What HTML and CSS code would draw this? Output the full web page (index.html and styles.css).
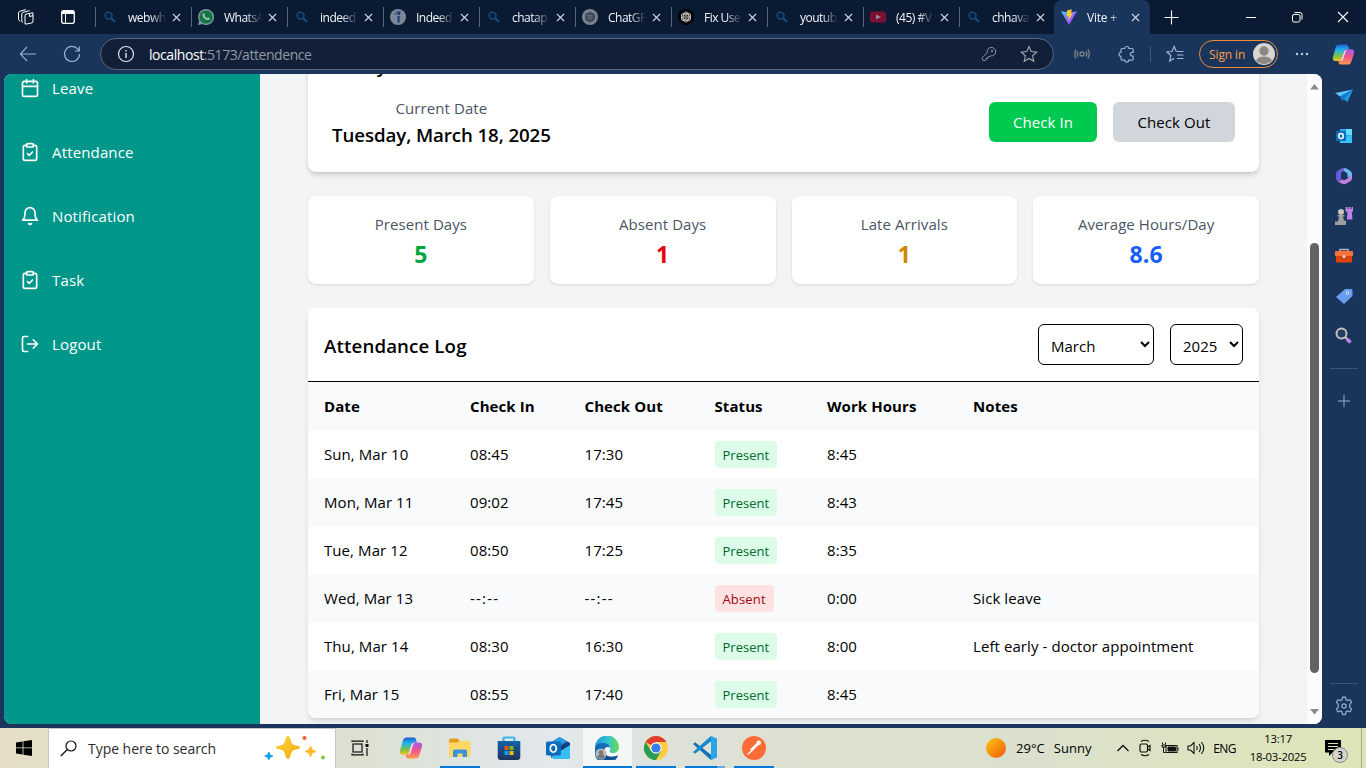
FILE: index.html
```html
<!DOCTYPE html>
<html lang="en">
<head>
<meta charset="utf-8">
<title>Vite + React</title>
<link rel="stylesheet" href="styles.css">
</head>
<body>
<svg class="defs" width="0" height="0">
  <defs>
    <linearGradient id="gVite" x1="0" y1="0" x2="1" y2="1"><stop offset="0" stop-color="#41d1ff"/><stop offset=".6" stop-color="#9b5cff"/><stop offset="1" stop-color="#bd34fe"/></linearGradient>
    <linearGradient id="gCopA" x1="0" y1="0" x2="0" y2="1"><stop offset="0" stop-color="#1b5fd8"/><stop offset=".35" stop-color="#23b7e8"/><stop offset=".7" stop-color="#7cc04a"/><stop offset="1" stop-color="#f5c51c"/></linearGradient>
    <linearGradient id="gCopB" x1="0" y1="0" x2="0" y2="1"><stop offset="0" stop-color="#a558e8"/><stop offset=".5" stop-color="#f0568c"/><stop offset="1" stop-color="#ff9a4d"/></linearGradient>
    <linearGradient id="gSun" x1="0" y1="0" x2="1" y2="1"><stop offset="0" stop-color="#ffc814"/><stop offset="1" stop-color="#f0560c"/></linearGradient>
    <linearGradient id="gEdge" x1="0" y1="0" x2="1" y2="0"><stop offset="0" stop-color="#2393dd"/><stop offset=".55" stop-color="#30c3d0"/><stop offset="1" stop-color="#6ade4a"/></linearGradient>
    <linearGradient id="gStore" x1="0" y1="0" x2="0" y2="1"><stop offset="0" stop-color="#1164a8"/><stop offset="1" stop-color="#20345c"/></linearGradient>
    <linearGradient id="gStar" x1="0" y1="0" x2="1" y2="1"><stop offset="0" stop-color="#ffd93a"/><stop offset="1" stop-color="#f2a20c"/></linearGradient>
  </defs>
  <symbol id="search" viewBox="0 0 16 16"><circle cx="6.6" cy="6.6" r="3.4" fill="none" stroke="#11508c" stroke-width="1.5"/><path d="M9.2 9.2l4 4" stroke="#11508c" stroke-width="1.8"/></symbol>
  <symbol id="x" viewBox="0 0 10 10"><path d="M1 1l8 8M9 1l-8 8" stroke="#dfe4ec" stroke-width="1.3" fill="none"/></symbol>
  <symbol id="knot" viewBox="0 0 16 16"><g fill="none" stroke-width=".9"><ellipse cx="8" cy="8" rx="2.8" ry="5"/><ellipse cx="8" cy="8" rx="2.8" ry="5" transform="rotate(60 8 8)"/><ellipse cx="8" cy="8" rx="2.8" ry="5" transform="rotate(120 8 8)"/><circle cx="8" cy="8" r="1.300"/></g></symbol>
  <symbol id="copilot" viewBox="0 0 24 24"><path d="M7.500 1.500h7.200c1.300 0 2 .8 2.300 2l.9 3h-2.700c-1.500 0-2.200.8-2.700 2.300L10 16.500c-.5 1.500-1.200 2.300-2.700 2.300H4c-3 0-3.600-2.300-2.900-4.800L4 4.300c.7-2 1.700-2.800 3.500-2.800z" fill="url(#gCopA)"/><path d="M16.500 22.500H9.300c-1.300 0-2-.8-2.300-2l-.5-1.700h.8c1.500 0 2.200-.8 2.700-2.300l2.900-8c.5-1.500 1.200-2 2.700-2H20c3 0 3.600 2.300 2.900 4.800L20 19.700c-.7 2-1.700 2.800-3.500 2.800z" fill="url(#gCopB)"/><path d="M12.500 8.800L10 16.500q-.5 1.700-1.700 2.200h1.200q1.600 0 2.200-1.900l2.400-7.500q.5-1.700 1.700-2.300h-1q-1.700 0-2.300 1.800z" fill="#fff" opacity=".75"/></symbol>
  <symbol id="clip" viewBox="0 0 24 24"><rect x="8" y="2" width="8" height="4" rx="1"/><path d="M16 4h2a2 2 0 0 1 2 2v14a2 2 0 0 1-2 2H6a2 2 0 0 1-2-2V6a2 2 0 0 1 2-2h2M9 14l2 2 4-4"/></symbol>
</svg>

<header class="tabs">
  <div class="tabs-lead">
    <svg width="18" height="18" viewBox="0 0 18 18" fill="none" stroke="#fff" stroke-width="1"><rect x="8" y="5.500" width="8" height="10" rx="1.500" transform="skewY(-12) translate(0 2.500)"/><path d="M6 14.500Q4.800 14 4.800 13V6q0-1.300 1-1.600L12.500 2.700M3.200 13Q1.500 12.500 1.500 11.500V5q0-1.300 1-1.600L9 1.500M12.500 5v3.500l3.500-.8"/></svg>
    <svg width="16" height="16" viewBox="0 0 16 16"><rect x="1.700" y="1.700" width="12.600" height="12.600" rx="2" fill="none" stroke="#fff" stroke-width="1.300"/><path d="M2 2h12v3H2z" fill="#fff"/><path d="M5.500 5v9" stroke="#fff"/></svg>
  </div>
  <div class="tab"><svg class="fav"><use href="#search"/></svg><span>webwh</span><svg class="x"><use href="#x"/></svg></div>
  <div class="tab"><svg class="fav" viewBox="0 0 16 16"><path d="M8 0a8 8 0 1 1-3.800 15L0 16l1.100-4A8 8 0 0 1 8 0z" fill="#7e949e"/><circle cx="8" cy="8" r="6.600" fill="#117443"/><path d="M5.400 4.300c1-.5 1.500 1 1.600 1.700l-.5.8q1 1.800 2.600 2.400l.9-.9 1.700.9c.2 1.500-1.200 2.200-2.500 1.800C6.400 10.300 4.500 8 4.500 6q0-1 .9-1.700z" fill="#a8bcb9"/></svg><span>WhatsA</span><svg class="x"><use href="#x"/></svg></div>
  <div class="tab"><svg class="fav"><use href="#search"/></svg><span>indeed</span><svg class="x"><use href="#x"/></svg></div>
  <div class="tab"><svg class="fav" viewBox="0 0 16 16"><circle cx="8" cy="8" r="8" fill="#7b8797"/><circle cx="8.800" cy="4.600" r="1.500" fill="#163a78"/><path d="M8.600 7v6.500" stroke="#163a78" stroke-width="2"/><path d="M4.800 6Q6 2 10.800 3" stroke="#163a78" fill="none"/></svg><span>Indeed</span><svg class="x"><use href="#x"/></svg></div>
  <div class="tab"><svg class="fav"><use href="#search"/></svg><span>chatap</span><svg class="x"><use href="#x"/></svg></div>
  <div class="tab"><svg class="fav" viewBox="0 0 16 16" stroke="#323d4e"><circle cx="8" cy="8" r="8" fill="#7b8491" stroke="none"/><use href="#knot"/></svg><span>ChatGP</span><svg class="x"><use href="#x"/></svg></div>
  <div class="tab"><svg class="fav" viewBox="0 0 16 16" stroke="#c8c8c8"><circle cx="8" cy="8" r="8" fill="#000" stroke="none"/><use href="#knot"/></svg><span>Fix Use</span><svg class="x"><use href="#x"/></svg></div>
  <div class="tab"><svg class="fav"><use href="#search"/></svg><span>youtub</span><svg class="x"><use href="#x"/></svg></div>
  <div class="tab"><svg class="fav" viewBox="0 0 16 16"><rect y="2.500" width="16" height="11" rx="2.500" fill="#7b1033"/><path d="M6 5.500v5L11 8z" fill="#8e8d9b"/></svg><span>(45) #V</span><svg class="x"><use href="#x"/></svg></div>
  <div class="tab"><svg class="fav"><use href="#search"/></svg><span>chhava</span><svg class="x"><use href="#x"/></svg></div>
  <div class="tab active"><svg class="fav" viewBox="0 0 16 16"><path d="M0 2.200L8 16l8-13.800-7 1.200z" fill="url(#gVite)"/><path d="M6 1.500L10.800.3 10 4.200l1.800-.3L7.500 12l.3-4.800-2 .4z" fill="#ffc72a"/></svg><span>Vite +</span><svg class="x"><use href="#x"/></svg></div>
  <svg class="plus" width="15" height="15" viewBox="0 0 15 15"><path d="M7.500.5v14M.5 7.500h14" stroke="#fff" stroke-width="1.100"/></svg>
  <div class="win">
    <svg width="12" height="12"><path d="M1 6.500h10" stroke="#fff"/></svg>
    <svg width="12" height="12" fill="none" stroke="#fff"><rect x="1.500" y="3.500" width="7.500" height="7.500" rx="1.500"/><path d="M3.500 1.500h5.500q2 0 2 2v5"/></svg>
    <svg width="12" height="12"><path d="M1 1l10 10M11 1L1 11" stroke="#fff" stroke-width="1.100"/></svg>
  </div>
</header>

<nav class="toolbar">
  <svg class="back" width="18" height="16" viewBox="0 0 18 16" fill="none" stroke="#97afd0" stroke-width="1.100"><path d="M17 8H1.500M8 1L1.300 8 8 15"/></svg>
  <svg class="reload" width="18" height="18" viewBox="0 0 18 18" fill="none" stroke="#97afd0" stroke-width="1.200"><path d="M16.500 9A7.500 7.500 0 1 1 14.800 4.200L16.300 6M16.300 1.500V6h-4.500"/></svg>
  <div class="address">
    <svg width="18" height="18" viewBox="0 0 18 18" fill="none" stroke="#dfe4ec" stroke-width="1.200"><circle cx="9" cy="9" r="7.500"/><path d="M9 8v5M9 5v1.400" stroke-width="1.400"/></svg>
    <p class="url"><b>localhost</b>:5173/attendence</p>
    <svg class="key" width="16" height="16" viewBox="0 0 16 16" fill="none" stroke="#8b929e"><path d="M6.200 6.700A4.300 4.300 0 1 1 9.400 9.900L8 11H6.700v1.500H5.200v1.400L4.600 14.500H2q-.8-.2-.7-1v-2z"/><circle cx="11" cy="5" r=".8"/></svg>
    <svg class="star" width="18" height="18" viewBox="0 0 18 18" fill="none" stroke="#a2a7b0" stroke-width="1.100"><path d="M9 1.500l2.200 5 5.600.6-4.200 3.700 1.200 5.500L9 13.500l-4.800 2.800 1.200-5.500L1.200 7.100l5.600-.6z"/></svg>
  </div>
  <div class="tools">
    <svg width="18" height="18" viewBox="0 0 18 18" fill="none" stroke="#7c8188" stroke-width="1.400"><circle cx="9" cy="9" r="2"/><path d="M5 6.300Q3.500 9 5 11.700M13 6.300Q14.500 9 13 11.700M3 4.500Q.5 9 3 13.500M15 4.500Q17.500 9 15 13.500"/></svg>
    <svg width="18" height="18" viewBox="0 0 18 18" fill="none" stroke="#97afd0" stroke-width="1.200"><path d="M4 3.500h2.800a2 2 0 1 1 4 0h3.400q1 0 1 1v2.800h-1a1.900 1.900 0 1 0 0 3.800h1v3q0 1-1 1h-3.400a2 2 0 1 1-4 0H4q-1 0-1-1v-2.800a2 2 0 1 1 0-4V4.500q0-1 1-1z"/></svg>
    <i class="divider"></i>
    <svg width="18" height="18" viewBox="0 0 18 18" fill="none" stroke="#a2b7d3" stroke-width="1.200"><path d="M10.300 6.200L8.200 1.500l-2.200 5-5 .5 3.800 3.500-1.100 5.500 4.500-2.700M10.500 6.500h7M11 10h6.500M11 13.500h6.500"/></svg>
  </div>
  <div class="signin"><span>Sign in</span><svg width="22" height="22" viewBox="0 0 22 22"><circle cx="11" cy="11" r="11" fill="#d8d6d2"/><circle cx="11" cy="8" r="4.700" fill="#8c8984"/><path d="M3 17.500q2-4 8-4t8 4A11 11 0 0 1 3 17.500z" fill="#8c8984"/></svg></div>
  <svg class="dots" width="14" height="4" fill="#c1cfe2"><circle cx="2" cy="2" r="1.200"/><circle cx="7" cy="2" r="1.200"/><circle cx="12" cy="2" r="1.200"/></svg>
  <svg class="cop" width="23" height="23"><use href="#copilot"/></svg>
</nav>

<div class="middle">
  <div class="page">
    <aside class="sidebar">
      <a><svg class="ico" viewBox="0 0 24 24"><rect x="3" y="4" width="18" height="18" rx="2"/><path d="M8 2v4M16 2v4M3 10h18"/></svg>Leave</a>
      <a><svg class="ico"><use href="#clip"/></svg>Attendance</a>
      <a><svg class="ico" viewBox="0 0 24 24"><path d="M6 8a6 6 0 0 1 12 0c0 7 3 9 3 9H3s3-2 3-9M10.300 21a1.940 1.940 0 0 0 3.400 0"/></svg>Notification</a>
      <a><svg class="ico"><use href="#clip"/></svg>Task</a>
      <a><svg class="ico" viewBox="0 0 24 24"><path d="M9 21H5a2 2 0 0 1-2-2V5a2 2 0 0 1 2-2h4M16 17l5-5-5-5M21 12H9"/></svg>Logout</a>
    </aside>
    <main class="content">
      <section class="card today">
        <h2>Today's Attendance</h2>
        <div class="today-row">
          <div class="date"><p>Current Date</p><strong>Tuesday, March 18, 2025</strong></div>
          <div class="actions"><button class="in">Check In</button><button class="out">Check Out</button></div>
        </div>
      </section>
      <section class="stats">
        <div class="card stat"><p>Present Days</p><b class="green">5</b></div>
        <div class="card stat"><p>Absent Days</p><b class="red">1</b></div>
        <div class="card stat"><p>Late Arrivals</p><b class="amber">1</b></div>
        <div class="card stat"><p>Average Hours/Day</p><b class="blue">8.6</b></div>
      </section>
      <section class="card log">
        <div class="log-head">
          <h2>Attendance Log</h2>
          <select class="month"><option>March</option></select>
          <select class="year"><option>2025</option></select>
        </div>
        <table>
          <colgroup><col class="c1"><col class="c2"><col class="c3"><col class="c4"><col class="c5"><col></colgroup>
          <thead><tr><th>Date</th><th>Check In</th><th>Check Out</th><th>Status</th><th>Work Hours</th><th>Notes</th></tr></thead>
          <tbody>
            <tr><td>Sun, Mar 10</td><td>08:45</td><td>17:30</td><td><span class="badge">Present</span></td><td>8:45</td><td></td></tr>
            <tr><td>Mon, Mar 11</td><td>09:02</td><td>17:45</td><td><span class="badge">Present</span></td><td>8:43</td><td></td></tr>
            <tr><td>Tue, Mar 12</td><td>08:50</td><td>17:25</td><td><span class="badge">Present</span></td><td>8:35</td><td></td></tr>
            <tr><td>Wed, Mar 13</td><td class="dash">--:--</td><td class="dash">--:--</td><td><span class="badge absent">Absent</span></td><td>0:00</td><td>Sick leave</td></tr>
            <tr><td>Thu, Mar 14</td><td>08:30</td><td>16:30</td><td><span class="badge">Present</span></td><td>8:00</td><td>Left early - doctor appointment</td></tr>
            <tr><td>Fri, Mar 15</td><td>08:55</td><td>17:40</td><td><span class="badge">Present</span></td><td>8:45</td><td></td></tr>
          </tbody>
        </table>
      </section>
    </main>
    <div class="scrollbar">
      <svg width="9" height="6"><path d="M4.500 0L9 5.500H0z" fill="#8b8b8b"/></svg>
      <i class="thumb"></i>
      <svg width="9" height="6"><path d="M4.500 5.500L9 0H0z" fill="#8b8b8b"/></svg>
    </div>
  </div>
  <aside class="rail">
    <svg viewBox="0 0 18 18"><path d="M0 6l18-3.500L5 9.500z" fill="#58c8f7"/><path d="M5 9.500l13-7L12.500 15z" fill="#1e9be8"/><path d="M5 9.500L18 2.500 7 14z" fill="#1478cc"/></svg>
    <svg viewBox="0 0 18 18"><path d="M5 2h12v14H5z" fill="#2aa8ea"/><path d="M11 2h6v6h-6z" fill="#5fdcff"/><path d="M5 12l12-4v8H5z" fill="#35c3f4"/><rect x="1" y="4" width="10" height="10" rx="1" fill="#0f6cbd"/><ellipse cx="6" cy="9" rx="2.300" ry="2.600" fill="none" stroke="#fff" stroke-width="1.500"/></svg>
    <svg viewBox="0 0 18 18"><path d="M9.500 1Q8 .8 6.500 1.600L2.500 4Q1 5 1 7v4q0 2 1.500 3l1.500.8 2-2.300V7q0-1.500 1.300-2.200z" fill="#6a5bd8"/><path d="M9.500 1q1 0 2 .6l4 2.400Q17 5 17 7v5.500L12.500 10V7.500q0-1.300-1.200-2L8 3.500z" fill="#6fb6f5"/><path d="M17 10.500v.5q0 2-1.500 3l-4 2.500q-2.500 1.300-5 0l-4-2.300q3 .5 4.500-2l1 .6q1.200.6 2.300 0l2.500-1.500L14.500 9z" fill="#c07fe0"/></svg>
    <svg viewBox="0 0 18 18"><path d="M10.500 0h2v2h1V0h2v2h1V0h1.500v4l-1.200 1.500.7 7h-5.700l.7-7L10.500 4z" fill="#bd83e4"/><circle cx="6" cy="5" r="3" fill="#c5c2bf"/><path d="M2.500 8h7v1.500H8l1 4h2V18H0v-3.500h3l1-5H2.500z" fill="#a19f9d"/></svg>
    <svg viewBox="0 0 18 18"><path d="M5 5V2.500h8V5" fill="none" stroke="#b8b5b2" stroke-width="1.500"/><rect y="4" width="18" height="5.500" rx="1" fill="#f7713b"/><path d="M1 9h16v6.500H1z" fill="#d9430f"/><circle cx="9" cy="9.500" r="1.500" fill="#e1dfdd"/></svg>
    <svg viewBox="0 0 18 18"><path d="M10 2h6q1.500 0 1.500 1.500V9L9 17 1 10z" fill="#6a9cf0"/><circle cx="12.500" cy="6" r="1.800" fill="#e1f1ff"/><circle cx="12.500" cy="6" r=".8" fill="#274582"/></svg>
    <svg viewBox="0 0 18 18"><circle cx="6.500" cy="6.500" r="5" fill="#263e60" stroke="#c3c0bd" stroke-width="2"/><path d="M10.500 10.500l1.500 1.500" stroke="#d2d0ce" stroke-width="2"/><path d="M12 12l3.500 3.500" stroke="#bd83e4" stroke-width="3.500"/></svg>
    <i class="rule"></i>
    <svg class="add" viewBox="0 0 12 12"><path d="M6 0v12M0 6h12" stroke="#97afd0" stroke-width="1"/></svg>
    <i class="rule bottom"></i>
    <svg class="gear" viewBox="0 0 20 20" fill="none" stroke="#97afd0" stroke-width="1.200"><circle cx="10" cy="10" r="2.200"/><path d="M8 3.500l.6-2.300q1.400-.3 2.800 0l.6 2.300 1.800 1 2.300-.7q1 1 1.400 2.400L15.800 8.500v3l1.700 1.700q-.4 1.400-1.400 2.500l-2.300-.7-1.800 1-.6 2.500q-1.400.3-2.800 0L8 16l-1.800-1-2.300.7q-1-1.100-1.400-2.500l1.700-1.700v-3L2.500 6.200Q2.900 4.800 3.900 3.800l2.300.7z"/></svg>
  </aside>
</div>

<footer class="taskbar">
  <div class="start"><svg width="16" height="16" viewBox="0 0 16 16"><path d="M0 2.400l6.600-1v6.100H0zM7.400 1.200L16 0v7.500H7.400zM0 8.300h6.600v6.200L0 13.600zM7.400 8.300H16V16l-8.600-1.300z"/></svg></div>
  <div class="search">
    <svg width="17" height="17" viewBox="0 0 17 17" fill="none" stroke="#111" stroke-width="1.200"><circle cx="11" cy="6" r="5"/><path d="M7.300 9.500L.8 16"/></svg>
    <span>Type here to search</span>
    <svg class="sparkles" width="62" height="28" viewBox="0 0 62 28"><path d="M24 1c2.500 0 2.500 6 4.500 8s7.500 1.500 7.500 3.500-5.500 1.500-7.500 3.500-2 8-4.500 8-2.500-6-4.500-8-7.500-1.500-7.500-3.500 5.500-1.500 7.500-3.500 2-8 4.500-8z" fill="url(#gStar)"/><path d="M46.500 11c1.300 0 1 2.500 2 3.500s3.500.6 3.500 1.900-2.500.9-3.500 1.900-.7 3.700-2 3.700-1-2.700-2-3.700-3.500-.6-3.500-1.900 2.500-.9 3.500-1.900.7-3.500 2-3.500z" fill="#fbbd21"/><path d="M5 17c1.300 0 .8 2 1.500 2.700s2.500.2 2.500 1.600-2 .7-2.700 1.400-.3 2.300-1.600 2.300-.8-1.900-1.500-2.600S.5 22 .5 20.900s2-.8 2.700-1.500S3.700 17 5 17z" fill="#1d9ee8"/><circle cx="40.500" cy="3" r="2.100" fill="#f2602f"/><circle cx="59" cy="22.500" r="2" fill="#84c341"/></svg>
  </div>
  <div class="taskview"><svg width="18" height="16" fill="none" stroke="#111" stroke-width="1.200"><rect x="2" y="4" width="9" height="8"/><path d="M1 2V.500M1 1.200h11M1 14.800h11M1 15.500V13.500M12 .500V2M12 15.500V13.500M16 0v3M16 8v8"/><path d="M14.500 5.500h3" stroke-width="3"/></svg></div>
  <div class="apps">
    <div class="app"><svg><use href="#copilot"/></svg></div>
    <div class="app open"><svg viewBox="0 0 24 24"><path d="M1 4q0-1.500 1.500-1.500h7L12 5v3H1z" fill="#dfa11a"/><path d="M1 6.500h8.500L12 4.700h9.500q1 0 1 1V20q0 1-1 1H2q-1 0-1-1z" fill="#ffd766"/><path d="M5 21v-6q0-1.500 1.500-1.500h11q1.500 0 1.500 1.500v6h-4.500v-3.500h-5V21z" fill="#3b92d8"/></svg></div>
    <div class="app"><svg viewBox="0 0 24 24"><path d="M6.500 7V2.500q0-1 1-1h9q1 0 1 1V7" fill="none" stroke="#43b5ea" stroke-width="2.200"/><path d="M.7 5h22.600v16q0 3-3 3H3.700q-3 0-3-3z" fill="url(#gStore)"/><path d="M7.500 10h4v4h-4z" fill="#f25022"/><path d="M12.500 10h4v4h-4z" fill="#7fba00"/><path d="M7.500 15h4v4h-4z" fill="#00a4ef"/><path d="M12.500 15h4v4h-4z" fill="#ffb900"/></svg></div>
    <div class="app"><svg viewBox="0 0 24 24"><path d="M4 7l9.500-6L24 7v14q0 1-1 1H5z" fill="#1463b5"/><path d="M4 7l9.500-6 7 4-9 6z" fill="#2c9be0"/><path d="M22 6l2 1v4l-9 5V10z" fill="#123f7b"/><path d="M24 9v13q0 1-1 1H8l-3-2z" fill="#38bdf2"/><rect y="5.500" width="15" height="14" rx="1.500" fill="#0f6cbd"/><ellipse cx="7.300" cy="12.400" rx="3" ry="3.700" fill="none" stroke="#fff" stroke-width="1.800"/></svg></div>
    <div class="app open current"><svg viewBox="0 0 24 24"><path d="M0 12A12 12 0 0 1 24 11c0 4-3 6-6 6s-4-1-3-3 0-6-6-6-9 2-9 4z" fill="url(#gEdge)"/><path d="M0 12c0-3 4-5 8-5 5 0 7 3 7 5-2-2-6-1-6 3s5 8 14 4.500A12 12 0 0 1 0 12z" fill="#116bb7"/><path d="M9 15c0 4 5 8 14 4.500-3 4-8 5-12 4.500-4-2-6-9 0-12q-2 1-2 3z" fill="#144c91"/><circle cx="6" cy="18" r="5.500" fill="#b9b9b9"/><circle cx="6" cy="16.500" r="2.300" fill="#777"/><path d="M2 21q1-3 4-3t4 3q-4 4-8 0z" fill="#777"/></svg></div>
    <div class="app open"><svg viewBox="0 0 24 24"><circle cx="12" cy="12" r="12" fill="#ffcd41"/><path d="M12 12L1.600 6A12 12 0 0 1 22.400 6H12z" fill="#df3d30"/><path d="M1.600 6A12 12 0 0 0 12 24l5-9-10 0z" fill="#279c52"/><circle cx="12" cy="12" r="5.700" fill="#fff"/><circle cx="12" cy="12" r="4.600" fill="#3b7ded"/></svg></div>
    <div class="app open multi"><svg viewBox="0 0 24 24"><path d="M0 8l2-1.700L18 18.700V24z" fill="#1073b7"/><path d="M0 16l2 1.700L18 5.300V0z" fill="#178ad2"/><path d="M18 0l6 2.500v19L18 24z" fill="#2ba5ea"/></svg></div>
    <div class="app open"><svg viewBox="0 0 24 24"><circle cx="12" cy="12" r="12" fill="#ff6c37"/><path d="M9 14.500l6.500-6.500" stroke="#fff" stroke-width="2.800"/><path d="M5.500 18.500l4.500-4" stroke="#fff" stroke-width="1.500"/><circle cx="16.800" cy="6.800" r="2.200" fill="#fff"/></svg></div>
  </div>
  <div class="weather"><svg width="20" height="20"><circle cx="10" cy="10" r="10" fill="url(#gSun)"/></svg><span class="temp">29°C</span><span>Sunny</span></div>
  <div class="tray">
    <svg width="14" height="16" fill="none" stroke="#111" stroke-width="1.300"><path d="M1.500 11L7 5.500 12.500 11"/></svg>
    <svg width="14" height="18" fill="none" stroke="#111" stroke-width="1.200"><rect x="2" y="5" width="7.500" height="8" rx="1.500"/><path d="M9.500 8l2.500-1.500v5L9.500 10M3 2.500q4-2.500 8 0M3 15.500q4 2.500 8 0"/></svg>
    <svg width="18" height="14" fill="none" stroke="#111"><rect x="5" y="4.500" width="11" height="7"/><path d="M7 6h7.500v4H7z" fill="#111"/><path d="M17 6.500v3M2.500 6v5.500h2M1.500 1.500v2M4.500 1.500v2M1 4h4v2H1z"/></svg>
    <svg width="18" height="16" fill="none" stroke="#111" stroke-width="1.100"><path d="M1 6h2.500L7 2.500v11L3.500 10H1zM9.500 6q1.500 2 0 4M12 4q3 4 0 8M14.300 2q5 6 0 12"/></svg>
  </div>
  <span class="lang">ENG</span>
  <div class="clock"><span>13:17</span><span class="day">18-03-2025</span></div>
  <div class="notif"><svg width="16" height="16"><path d="M0 0h16v12.500h-8.500L4 16v-3.500H0z"/><path d="M3 3.500h10M3 6.500h10M3 9.500h6" stroke="#dde3bf"/></svg><b>3</b></div>
  <i class="peek"></i>
</footer>
</body>
</html>
```
FILE: styles.css
```css
* { box-sizing: border-box; }
body { margin: 0; width: 1366px; height: 768px; overflow: hidden; display: flex; flex-direction: column; background: #1a355b; font-family: "Open Sans", "Noto Sans", sans-serif; font-size: 15px; color: #000; }
p, h2 { margin: 0; }
svg { display: block; flex: none; }
.defs { position: absolute; }

/* Browser tab strip */
.tabs { height: 34px; flex: none; display: flex; align-items: center; background: #0a1a33; }
.tabs-lead { width: 95px; padding-left: 17px; display: flex; align-items: center; gap: 25px; }
.tab { width: 96px; height: 34px; display: flex; align-items: center; padding-left: 6px; color: #f2f4f8; font-size: 12px; letter-spacing: -.5px; background: linear-gradient(#58657a, #58657a) no-repeat 0 7px / 1px 20px; }
.fav { width: 16px; height: 16px; }
.tab .fav { margin-left: 1px; }
.tab span { width: 40px; margin: 0 4px 0 10px; white-space: nowrap; -webkit-mask: linear-gradient(90deg, #000 55%, transparent 95%); mask: linear-gradient(90deg, #000 55%, transparent 95%); }
.x { width: 9px; height: 9px; }
.tab.active { background: #1a355b; border-radius: 8px 8px 0 0; width: 96px; margin-left: -1px; letter-spacing: -.2px; }
.plus { margin: 0 0 0 14px; }
.win { margin-left: auto; padding-right: 17px; display: flex; gap: 34px; }

/* Navigation bar */
.toolbar { height: 40px; flex: none; display: flex; align-items: center; padding-left: 19px; }
.reload { margin-left: 26px; }
.address { width: 954px; height: 32px; margin-left: 19px; border: 1px solid #59667b; border-radius: 16px; background: #112038; display: flex; align-items: center; padding: 0 14px 0 16px; }
.url { margin: 0 auto 0 14px; font-size: 14px; letter-spacing: -.43px; color: #9198a3; }
.url b { font-weight: 400; color: #fff; }
.star { margin-left: 23px; margin-right: 1px; }
.tools { display: flex; align-items: center; gap: 27px; margin-left: 19px; }
.divider { width: 1px; height: 16px; background: #3e587d; margin: 0 -12px 0 -13px; }
.signin { width: 79px; height: 28px; margin-left: 15px; border: 1px solid #ef8b3a; border-radius: 14px; display: flex; align-items: center; justify-content: space-between; padding: 0 2px 0 9px; color: #ff9c4f; font-size: 12px; letter-spacing: -.1px; }
.dots { margin-left: 17px; }
.cop { margin-left: 23px; }

/* Page viewport */
.middle { height: 654px; flex: none; display: flex; padding: 0 0 4px 4px; }
.page { width: 1318px; height: 650px; border-radius: 8px; overflow: hidden; display: flex; background: #f3f4f6; letter-spacing: .08px; }
.sidebar { width: 256px; background: #009689; color: #fff; padding: 2px 16px; display: flex; flex-direction: column; gap: 40px; letter-spacing: .15px; }
.sidebar a { height: 24px; display: flex; align-items: center; gap: 12px; }
.ico { width: 20px; height: 20px; fill: none; stroke: #fff; stroke-width: 2; stroke-linecap: round; stroke-linejoin: round; }
.content { flex: 1; padding: 0 48px; }
.card { background: #fff; border-radius: 8px; }
.today { margin-top: -46px; height: 144px; padding: 24px; box-shadow: 0 4px 6px -1px rgba(0,0,0,.14), 0 2px 4px -2px rgba(0,0,0,.14); }
h2 { font-size: 18.7px; line-height: 28px; font-weight: 600; }
.today h2 { margin-bottom: 16px; }
.today-row { display: flex; justify-content: space-between; align-items: center; }
.date { text-align: center; }
.date p, .stat p { line-height: 24px; color: #4a5565; }
.date strong { display: block; padding-top: 1px; font-size: 18.7px; line-height: 27px; font-weight: 600; letter-spacing: -.09px; white-space: nowrap; }
.actions { display: flex; gap: 16px; }
.actions button { border: 0; border-radius: 6px; height: 40px; width: 108px; padding: 0; font: inherit; letter-spacing: .1px; background: #00c950; color: #fff; }
.actions .out { width: 122px; background: #d1d5dc; color: #000; }
.stats { margin: 24px 0; display: grid; grid-template-columns: repeat(4, 1fr); gap: 16px; }
.stat { height: 88px; padding: 16px; text-align: center; box-shadow: 0 1px 3px rgba(0,0,0,.1), 0 1px 2px -1px rgba(0,0,0,.1); }
.stat b { display: block; padding-top: 2px; font-size: 23px; line-height: 32px; }
.green { color: #00a63e; }
.red { color: #e7000b; }
.amber { color: #d08700; }
.blue { color: #155dfc; }
.log { box-shadow: 0 4px 6px -1px rgba(0,0,0,.1), 0 2px 4px -2px rgba(0,0,0,.1); overflow: hidden; }
.log-head { height: 74px; display: flex; align-items: flex-start; gap: 16px; padding: 16px 16px 0; border-bottom: 1px solid #000; }
.log-head h2 { margin: 8px auto 0 0; letter-spacing: .12px; }
.log-head select { height: 41px; padding: 2px 8px 0; border: 1px solid #000; border-radius: 6px; font: inherit; background: #fff; color: #000; }
.log-head .month { width: 116px; }
.log-head .year { width: 73px; }
table { width: 100%; table-layout: fixed; border-collapse: collapse; }
.c1, .c5 { width: 146px; }
.c2 { width: 114.5px; }
.c3 { width: 130px; }
.c4 { width: 112.5px; }
tr { height: 48px; }
th, td { padding: 0 0 0 16px; text-align: left; line-height: 24px; white-space: nowrap; }
th { font-weight: 700; }
.dash { letter-spacing: 1.2px; }
thead tr, tbody tr:nth-child(even) { background: #f9fafb; }
.badge { display: inline-block; margin-top: 1px; height: 27px; line-height: 28px; padding: 0 8px; border-radius: 4px; background: #dcfce7; color: #016630; font-size: 13px; letter-spacing: 0; }
.badge.absent { background: #ffe2e2; color: #9f0712; letter-spacing: .15px; }
.scrollbar { width: 15px; background: #fcfcfc; display: flex; flex-direction: column; align-items: center; padding: 10px 0 9px; }
.thumb { width: 9px; height: 430px; margin: 153px 0 auto; border-radius: 5px; background: #636363; }

/* Edge side rail */
.rail { width: 44px; display: flex; flex-direction: column; align-items: center; padding-top: 13px; gap: 22px; }
.rail svg { width: 18px; height: 18px; }
.rule { width: 28px; height: 1px; background: #3a5479; margin-top: 1px; }
.rail .add { width: 12px; height: 12px; margin-top: 4px; }
.rule.bottom { margin-top: auto; }
.rail .gear { width: 20px; height: 20px; margin: -10px 0 8px; }

/* Windows taskbar */
.taskbar { height: 40px; flex: none; display: flex; align-items: center; background: linear-gradient(90deg, #e6dec8 0, #e2dec8 5%, #dce1d2 27%, #dfe5e4 35%, #e2e8ec 41%, #dee1d8 50%, #dee0cd 62%, #dbe0ce 75%, #dee4bd 92%, #dde5b8 100%); }
.start { width: 48px; display: flex; justify-content: center; }
.search { width: 288px; height: 40px; border: 1px solid #c6c5c8; border-bottom-width: 0; background: #fff; display: flex; align-items: center; padding: 0 9px 0 11px; color: #2c2c2c; font-size: 14px; }
.search span { margin: 0 auto 0 11px; letter-spacing: -.04px; }
.taskview { width: 50.5px; padding-left: 15px; }
.apps { display: flex; }
.app { width: 49px; height: 40px; display: flex; align-items: center; justify-content: center; }
.app svg { width: 24px; height: 24px; }
.app.open { background: linear-gradient(#0078d7, #0078d7) no-repeat 50% 100% / 40px 2px; }
.app.current { background: linear-gradient(#0078d7, #0078d7) no-repeat 0 100% / 100% 2px, #f5f6f6; }
.app.multi { background: linear-gradient(90deg, #0078d7 80%, #67a9e2 80%) no-repeat 50% 100% / 40px 2px; }
.weather { margin-left: 207.5px; display: flex; align-items: center; gap: 10px; font-size: 13px; letter-spacing: .05px; }
.weather .temp { margin-right: -1px; }
.tray { display: flex; align-items: center; gap: 8.5px; margin-left: 24px; }
.lang { margin-left: 8px; font-size: 12px; letter-spacing: -.5px; width: 25px; }
.clock { width: 60px; margin-left: 10px; display: flex; flex-direction: column; align-items: center; font-size: 11.300px; line-height: 18px; letter-spacing: -.2px; }
.notif { margin-left: auto; margin-right: 20px; position: relative; }
.notif b { position: absolute; left: 7px; top: 7px; width: 16px; height: 16px; border: 1px solid #888; border-radius: 50%; background: #d5d5d0; font-size: 10px; line-height: 14px; text-align: center; font-weight: 600; }
.peek { width: 1px; height: 40px; background: #a8ac92; margin-right: 4px; }
```
